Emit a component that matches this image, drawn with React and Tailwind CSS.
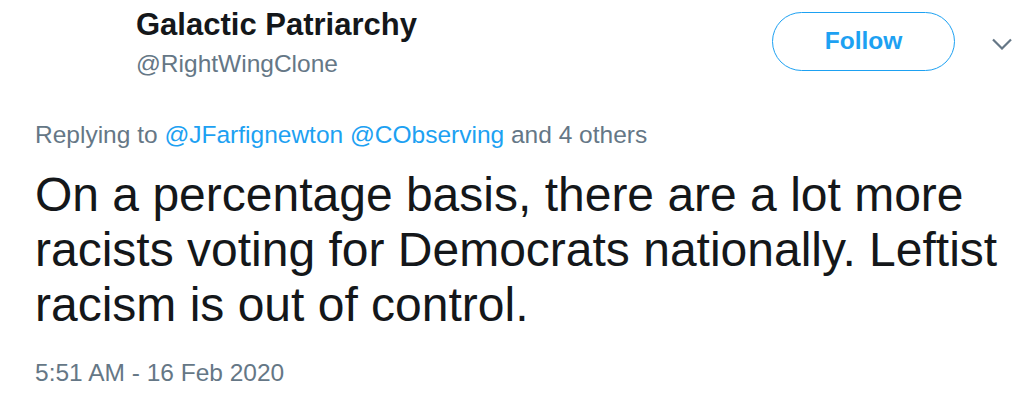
import React from 'react';

export default function App() {
  return (
    <div className="w-[1034px] h-[401px] bg-white overflow-hidden font-['Liberation_Sans',Arial,sans-serif]">
      <div className="flex items-start pl-[136px] pr-[22px] pt-[7px]">
        <div className="flex-1">
          <div className="text-[31px] leading-[36px] font-bold text-[#14171a]">Galactic Patriarchy</div>
          <div className="mt-[6px] text-[24.5px] leading-[30px] text-[#657786]">@RightWingClone</div>
        </div>
        <button className="mt-[5px] w-[183px] h-[59px] rounded-full border border-[#1da1f2] text-[#1da1f2] text-[24.5px] font-bold">
          Follow
        </button>
        <svg className="ml-[37px] mt-[31px]" width="20" height="12" viewBox="0 0 20 12" fill="none">
          <path d="M1 1.5 L10 10.5 L19 1.5" stroke="#657786" strokeWidth="2.2" />
        </svg>
      </div>

      <div className="mt-[41px] pl-[35px] text-[24.5px] leading-[30px] text-[#657786]">
        Replying to <span className="text-[#1da1f2]">@JFarfignewton</span>{' '}
        <span className="text-[#1da1f2]">@CObserving</span> and 4 others
      </div>

      <p className="mt-[17px] pl-[35px] pr-[20px] text-[48px] leading-[55px] text-[#14171a]">
        On a percentage basis, there are a lot more racists voting for Democrats nationally. Leftist racism is out of control.
      </p>

      <div className="mt-[26px] pl-[35px] text-[24.5px] leading-[30px] text-[#657786]">5:51 AM - 16 Feb 2020</div>
    </div>
  );
}
